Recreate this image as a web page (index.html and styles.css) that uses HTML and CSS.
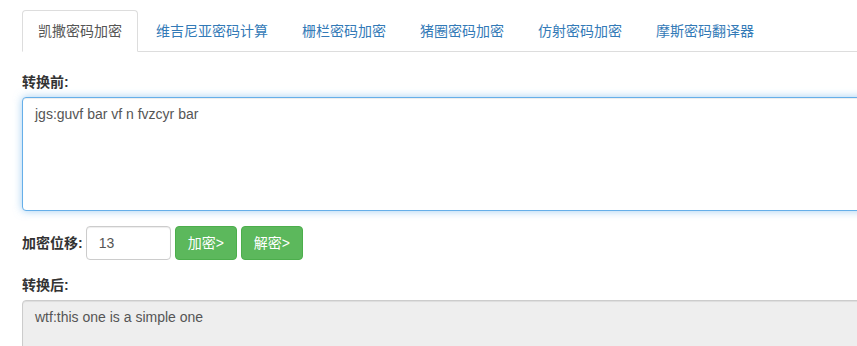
FILE: index.html
```html
<html>
	<head>
		<meta charset="utf-8">
		<link rel="stylesheet" href="styles.css">
	</head>
	<body>
		<div class="page">
			<ul class="tabs">
				<li class="active"><a href="#">凯撒密码加密</a></li>
				<li><a href="#">维吉尼亚密码计算</a></li>
				<li><a href="#">栅栏密码加密</a></li>
				<li><a href="#">猪圈密码加密</a></li>
				<li><a href="#">仿射密码加密</a></li>
				<li><a href="#">摩斯密码翻译器</a></li>
			</ul>

			<label class="lbl">转换前:</label>
			<textarea class="box focus" id="srcText">jgs:guvf bar vf n fvzcyr bar</textarea>

			<div class="row">
				<label class="lbl inl">加密位移:</label>
				<input type="text" class="shift" id="shift" value="13">
				<button class="btn">加密&gt;</button>
				<button class="btn">解密&gt;</button>
			</div>

			<label class="lbl">转换后:</label>
			<textarea class="box out" id="dstText" readonly>wtf:this one is a simple one</textarea>
		</div>
	</body>
</html>
```

FILE: styles.css
```css
html, body {
	margin: 0;
	overflow: hidden;
}
body {
	font-family: "Liberation Sans", Arial, "Noto Sans CJK SC", sans-serif;
	font-size: 14px;
	line-height: 20px;
	color: #333;
	background: #fff;
}
.page {
	width: 1100px;
	padding: 10px 22px;
}
.tabs {
	list-style: none;
	margin: 0 0 20px 0;
	padding: 0;
	display: flex;
	border-bottom: 1px solid #ddd;
}
.tabs li {
	margin-bottom: -1px;
}
.tabs a {
	display: block;
	padding: 10px 15px;
	margin-right: 2px;
	border: 1px solid transparent;
	border-radius: 4px 4px 0 0;
	color: #337ab7;
	text-decoration: none;
}
.tabs li.active a {
	color: #555;
	background: #fff;
	border-color: #ddd #ddd transparent;
}
.lbl {
	display: block;
	font-weight: bold;
	margin-bottom: 5px;
}
.lbl.inl {
	display: inline-block;
	margin: 0 -1px 0 0;
}
.box {
	display: block;
	box-sizing: border-box;
	width: 100%;
	height: 114px;
	padding: 6px 12px;
	margin: 0;
	font: inherit;
	color: #555;
	border: 1px solid #ccc;
	border-radius: 4px;
	background: #fff;
	box-shadow: inset 0 1px 1px rgba(0, 0, 0, .075);
	resize: vertical;
}
.box.focus {
	border-color: #66afe9;
	outline: 0;
	box-shadow: inset 0 1px 1px rgba(0, 0, 0, .075), 0 0 8px rgba(102, 175, 233, .6);
}
.box.out {
	background: #eee;
	height: 80px;
}
.row {
	display: flex;
	align-items: center;
	gap: 4px;
	margin: 15px 0;
}
.shift {
	box-sizing: border-box;
	width: 85px;
	height: 34px;
	padding: 6px 12px;
	font: inherit;
	color: #555;
	border: 1px solid #ccc;
	border-radius: 4px;
	box-shadow: inset 0 1px 1px rgba(0, 0, 0, .075);
}
.btn {
	box-sizing: border-box;
	height: 34px;
	padding: 6px 12px;
	font: inherit;
	color: #fff;
	background: #5cb85c;
	border: 1px solid #4cae4c;
	border-radius: 4px;
}
```
